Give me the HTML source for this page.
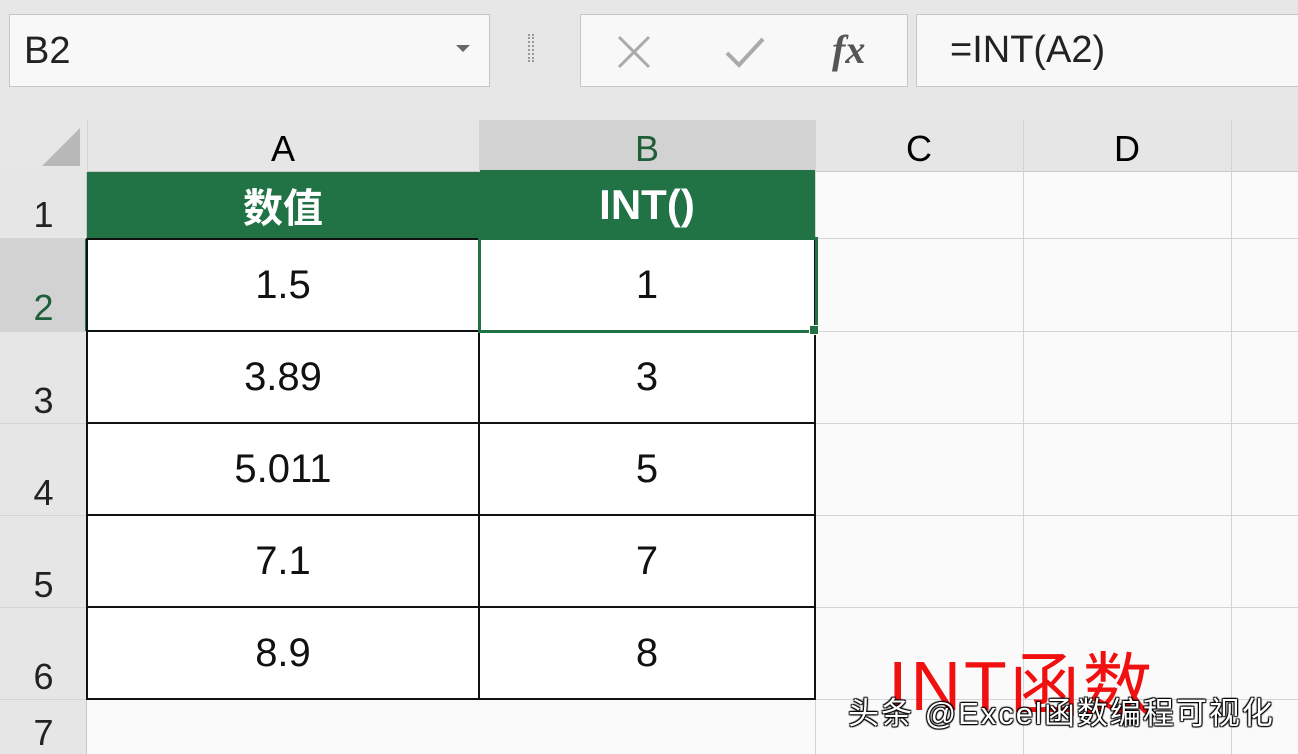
<!DOCTYPE html>
<html><head><meta charset="utf-8"><style>
*{margin:0;padding:0;box-sizing:border-box}
body{width:1298px;height:754px;overflow:hidden;background:#e7e7e7;font-family:"Liberation Sans","Noto Sans CJK SC",sans-serif;position:relative}
.a{position:absolute}
.box{background:#f8f8f9;border:1px solid #c6c6c6}
.hl{position:absolute;background:#d4d4d4}
.ct{position:absolute;display:flex;align-items:center;justify-content:center;font-size:40px;color:#111}
.rh{position:absolute;left:0;width:87px;font-size:36px;color:#222;text-align:center}
</style></head><body>
<div class="a box" style="left:9px;top:14px;width:481px;height:73px"></div>
<div class="a" style="left:24px;top:30px;font-size:38px;color:#222">B2</div>
<div class="a" style="left:456px;top:45px;width:0;height:0;border-left:7px solid transparent;border-right:7px solid transparent;border-top:7px solid #666"></div>
<div class="a" style="left:528px;top:34px;width:6px;height:28px;border-left:2px dotted #999;border-right:2px dotted #999"></div>
<div class="a box" style="left:580px;top:14px;width:328px;height:73px"></div>
<svg class="a" style="left:616px;top:34px" width="36" height="36"><path d="M3 3L33 33M33 3L3 33" stroke="#aaa" stroke-width="3"/></svg>
<svg class="a" style="left:724px;top:34px" width="42" height="36"><path d="M3 19L15 31L39 5" stroke="#aaa" stroke-width="4" fill="none"/></svg>
<div class="a" style="left:832px;top:26px;font-family:'Liberation Serif',serif;font-style:italic;font-weight:bold;font-size:40px;color:#555">fx</div>
<div class="a box" style="left:916px;top:14px;width:390px;height:73px"></div>
<div class="a" style="left:950px;top:29px;font-size:38px;color:#222">=INT(A2)</div>

<div class="a" style="left:87px;top:172px;width:1211px;height:582px;background:#fafafa"></div>
<div class="a" style="left:87px;top:120px;width:1211px;height:52px;background:#e6e6e6;border-bottom:1px solid #c8c8c8"></div>
<div class="a" style="left:479px;top:120px;width:336px;height:52px;background:#d2d2d2;border-bottom:2px solid #217346"></div>
<div class="a" style="left:0;top:172px;width:87px;height:582px;background:#e6e6e6;border-right:1px solid #c8c8c8"></div>
<div class="a" style="left:0;top:238px;width:87px;height:93px;background:#d2d2d2;border-right:2px solid #217346"></div>
<svg class="a" style="left:40px;top:126px" width="42" height="42"><path d="M40 2V40H2Z" fill="#b8b8b8"/></svg>
<div class="a" style="left:87px;top:120px;width:392px;text-align:center;font-size:36px;line-height:58px">A</div>
<div class="a" style="left:479px;top:120px;width:336px;text-align:center;font-size:36px;line-height:58px;color:#1e5e38">B</div>
<div class="a" style="left:815px;top:120px;width:208px;text-align:center;font-size:36px;line-height:58px">C</div>
<div class="a" style="left:1023px;top:120px;width:208px;text-align:center;font-size:36px;line-height:58px">D</div>
<div class="hl" style="left:479px;top:120px;width:1px;height:52px"></div>
<div class="hl" style="left:815px;top:120px;width:1px;height:634px"></div>
<div class="hl" style="left:1023px;top:120px;width:1px;height:634px"></div>
<div class="hl" style="left:1231px;top:120px;width:1px;height:634px"></div>
<div class="hl" style="left:87px;top:120px;width:1px;height:52px"></div>
<div class="hl" style="left:0;top:238px;width:1298px;height:1px"></div>
<div class="hl" style="left:0;top:331px;width:1298px;height:1px"></div>
<div class="hl" style="left:0;top:423px;width:1298px;height:1px"></div>
<div class="hl" style="left:0;top:515px;width:1298px;height:1px"></div>
<div class="hl" style="left:0;top:607px;width:1298px;height:1px"></div>
<div class="hl" style="left:0;top:699px;width:1298px;height:1px"></div>
<div class="rh" style="top:194px">1</div>
<div class="rh" style="top:287px;color:#1e5e38">2</div>
<div class="rh" style="top:380px">3</div>
<div class="rh" style="top:472px">4</div>
<div class="rh" style="top:564px">5</div>
<div class="rh" style="top:656px">6</div>
<div class="rh" style="top:712px">7</div>
<div class="ct" style="left:87px;top:172px;width:728px;height:66px;background:#217346"></div>
<div class="ct" style="left:87px;top:172px;width:392px;height:66px;color:#fff;font-weight:bold;font-size:40px">数值</div>
<div class="ct" style="left:479px;top:172px;width:336px;height:66px;color:#fff;font-weight:bold;font-size:42px">INT()</div>
<div class="a" style="left:86px;top:238px;width:730px;height:462px;background:#fff;border:2px solid #111"></div>
<div class="a" style="left:478px;top:238px;width:2px;height:462px;background:#111"></div>
<div class="a" style="left:86px;top:330px;width:730px;height:2px;background:#111"></div>
<div class="a" style="left:86px;top:422px;width:730px;height:2px;background:#111"></div>
<div class="a" style="left:86px;top:514px;width:730px;height:2px;background:#111"></div>
<div class="a" style="left:86px;top:606px;width:730px;height:2px;background:#111"></div>
<div class="a" style="left:478px;top:237px;width:340px;height:96px;border:3px solid #217346"></div>
<div class="a" style="left:809px;top:325px;width:10px;height:10px;background:#217346;border:1px solid #fff"></div>
<div class="ct" style="left:87px;top:240px;width:392px;height:90px">1.5</div>
<div class="ct" style="left:479px;top:240px;width:336px;height:90px">1</div>
<div class="ct" style="left:87px;top:332px;width:392px;height:90px">3.89</div>
<div class="ct" style="left:479px;top:332px;width:336px;height:90px">3</div>
<div class="ct" style="left:87px;top:424px;width:392px;height:90px">5.011</div>
<div class="ct" style="left:479px;top:424px;width:336px;height:90px">5</div>
<div class="ct" style="left:87px;top:516px;width:392px;height:90px">7.1</div>
<div class="ct" style="left:479px;top:516px;width:336px;height:90px">7</div>
<div class="ct" style="left:87px;top:608px;width:392px;height:90px">8.9</div>
<div class="ct" style="left:479px;top:608px;width:336px;height:90px">8</div>
<div class="a" style="left:888px;top:648px;font-size:70px;color:#f01010;line-height:76px;letter-spacing:3px">INT函数</div>
<div class="a" style="left:848px;top:696px;font-size:31px;color:#fff;line-height:36px;letter-spacing:2px;text-shadow:1px 1px 1px #000,-1px -1px 1px #000,1px -1px 1px #000,-1px 1px 1px #000">头条 @Excel函数编程可视化</div>
</body></html>
